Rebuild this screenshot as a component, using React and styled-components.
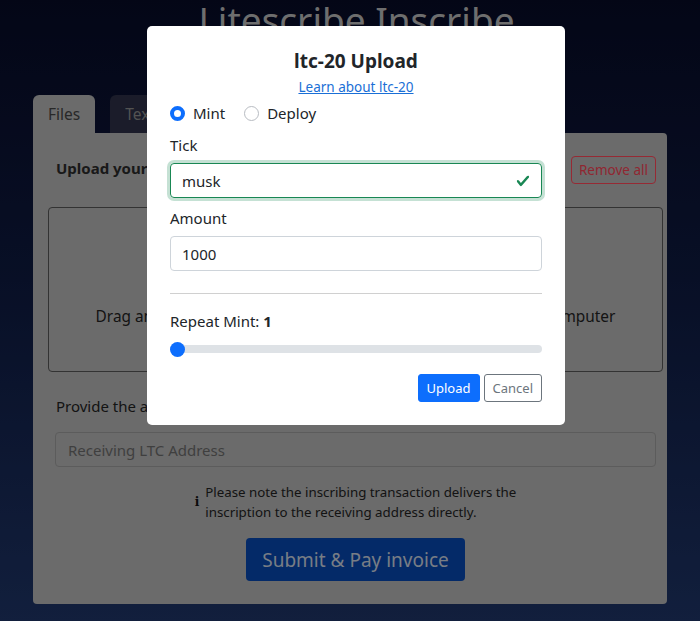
import React from 'react'
import styled, { createGlobalStyle } from 'styled-components'

const GlobalStyle = createGlobalStyle`
  html, body {
    margin: 0;
    padding: 0;
    height: 100%;
  }
  body {
    font-family: "Noto Sans", "Open Sans", sans-serif;
    color: #212529;
    background: linear-gradient(180deg, #070b26 0%, #0e1a40 45%, #1e3466 100%);
    min-height: 621px;
    overflow: hidden;
  }
`

const Page = styled.div`
  width: 700px;
  height: 621px;
  display: flex;
  flex-direction: column;
  align-items: center;
`

const Title = styled.h1`
  margin: -3px 0 0 13px;
  font-size: 37px;
  font-weight: 400;
  line-height: 46px;
  color: #b8b8b8;
`

const Tabs = styled.div`
  align-self: stretch;
  display: flex;
  gap: 15px;
  margin: 52px 0 0 33px;
`

const Tab = styled.div`
  height: 38px;
  padding: 0 15px;
  display: flex;
  align-items: center;
  font-size: 15.5px;
  border-radius: 6px 6px 0 0;
  background: ${p => (p.$active ? '#b2b2b2' : '#2d3046')};
  color: ${p => (p.$active ? '#444' : '#8a8a8a')};
`

const Card = styled.div`
  width: 634px;
  height: 471px;
  box-sizing: border-box;
  background: #b2b2b2;
  border-radius: 0 4px 4px 4px;
  padding: 23px 4px 0 15px;
  display: flex;
  flex-direction: column;
`

const CardHead = styled.div`
  display: flex;
  justify-content: space-between;
  align-items: center;
  padding: 0 7px 0 8px;
`

const HeadText = styled.div`
  font-weight: 700;
  font-size: 15px;
  line-height: 20px;
  margin-top: -4px;
  color: #2a2a2a;
`

const RemoveBtn = styled.button`
  font-family: inherit;
  font-size: 13.5px;
  height: 28px;
  padding: 0 7px;
  background: transparent;
  border: 1px solid #fb4658;
  border-radius: 4px;
  color: #f04152;
`

const Drop = styled.div`
  margin-top: 23px;
  height: 165px;
  box-sizing: border-box;
  border: 1px solid #555;
  border-radius: 4px;
  display: flex;
  justify-content: center;
  padding-top: 98px;
  font-size: 15.4px;
  color: #222;
  white-space: nowrap;
`

const FieldLabel = styled.div`
  margin-top: 24px;
  padding-left: 8px;
  font-size: 15px;
  color: #222;
`

const AddressInput = styled.div`
  margin: 16px 7px 0 7px;
  height: 35px;
  box-sizing: border-box;
  border: 1px solid #9a9a9a;
  border-radius: 4px;
  padding: 0 12px;
  display: flex;
  align-items: center;
  font-size: 15px;
  color: #6a6a6a;
`

const Note = styled.div`
  margin-top: 15px;
  margin-left: 0;
  align-self: center;
  display: flex;
  align-items: center;
  gap: 6px;
  font-size: 13.3px;
  line-height: 20px;
  color: #222;
`

const InfoIcon = styled.span`
  font-family: "DejaVu Serif", serif;
  font-weight: 700;
  font-size: 12px;
  color: #111;
`

const SubmitBtn = styled.button`
  align-self: center;
  margin-top: 16px;
  height: 43px;
  padding: 0 16px;
  font-family: inherit;
  font-size: 19px;
  border: none;
  border-radius: 4px;
  background: #0747ad;
  color: #c8d0de;
`

const Backdrop = styled.div`
  position: fixed;
  inset: 0;
  background: rgba(0, 0, 0, 0.4);
`

const Modal = styled.div`
  position: fixed;
  top: 26px;
  left: 147px;
  width: 418px;
  box-sizing: border-box;
  background: #fff;
  border-radius: 5px;
  padding: 23px 23px 23px;
  display: flex;
  flex-direction: column;
`

const ModalTitle = styled.h2`
  margin: 0;
  text-align: center;
  font-size: 19px;
  font-weight: 700;
  line-height: 24px;
  color: #212529;
`

const LearnLink = styled.a`
  margin-top: 4px;
  align-self: center;
  font-size: 13.5px;
  line-height: 20px;
  color: #1a6fd6;
  text-decoration: underline;
`

const RadioRow = styled.div`
  margin-top: 4px;
  display: flex;
  gap: 19px;
  height: 24px;
  align-items: center;
`

const RadioItem = styled.label`
  display: flex;
  align-items: center;
  gap: 8px;
  font-size: 15px;
`

const RadioDot = styled.span`
  width: 15px;
  height: 15px;
  box-sizing: border-box;
  border-radius: 50%;
  border: ${p => (p.$checked ? '4px solid #0d6efd' : '1px solid #b8bcc2')};
  background: #fff;
`

const Label = styled.div`
  margin-top: ${p => p.$mt || 9}px;
  font-size: 15px;
  line-height: 22px;
`

const InputBox = styled.div`
  margin-top: 7px;
  height: 35px;
  box-sizing: border-box;
  border: 1px solid ${p => (p.$valid ? '#198754' : '#ced4da')};
  box-shadow: ${p => (p.$valid ? '0 0 0 3px rgba(25,135,84,0.25)' : 'none')};
  border-radius: 4px;
  padding: 0 11px;
  display: flex;
  align-items: center;
  justify-content: space-between;
  font-size: 15px;
`

const Divider = styled.hr`
  margin: 22px 0 0;
  border: none;
  border-top: 1px solid #d0d0d0;
`

const RepeatLabel = styled(Label)`
  margin-top: 16px;
  b {
    font-weight: 700;
  }
`

const Range = styled.input`
  -webkit-appearance: none;
  appearance: none;
  margin: 9px 0 0;
  width: 100%;
  height: 16px;
  background: transparent;
  &::-webkit-slider-runnable-track {
    height: 8px;
    border-radius: 4px;
    background: #dee2e6;
  }
  &::-webkit-slider-thumb {
    -webkit-appearance: none;
    width: 15px;
    height: 15px;
    margin-top: -3.5px;
    border-radius: 50%;
    background: #0d6efd;
    border: none;
  }
`

const Footer = styled.div`
  margin-top: 17px;
  display: flex;
  justify-content: flex-end;
  gap: 4px;
`

const Btn = styled.button`
  font-family: inherit;
  font-size: 13px;
  height: 28px;
  padding: 0 8px;
  border-radius: 3px;
  border: 1px solid ${p => (p.$primary ? '#0d6efd' : '#6c757d')};
  background: ${p => (p.$primary ? '#0d6efd' : '#fff')};
  color: ${p => (p.$primary ? '#fff' : '#6c757d')};
`

const Check = () => (
  <svg width="14" height="14" viewBox="0 0 8 8">
    <path
      fill="#198754"
      d="M2.3 6.73.6 4.53c-.4-1.04.46-1.4 1.1-.8l1.1 1.4 3.4-3.8c.6-.63 1.6-.27 1.2.7l-4 4.6c-.43.5-.8.4-1.1.1z"
    />
  </svg>
)

export default function App() {
  return (
    <>
      <GlobalStyle />
      <Page>
        <Title>Litescribe Inscribe</Title>
        <Tabs>
          <Tab $active>Files</Tab>
          <Tab>Text</Tab>
        </Tabs>
        <Card>
          <CardHead>
            <HeadText>Upload your files</HeadText>
            <RemoveBtn>Remove all</RemoveBtn>
          </CardHead>
          <Drop>Drag and drop your files here, or click to select files from your computer</Drop>
          <FieldLabel>Provide the address to receive the inscription</FieldLabel>
          <AddressInput>Receiving LTC Address</AddressInput>
          <Note>
            <InfoIcon>i</InfoIcon>
            <span>
              Please note the inscribing transaction delivers the
              <br />
              inscription to the receiving address directly.
            </span>
          </Note>
          <SubmitBtn>Submit &amp; Pay invoice</SubmitBtn>
        </Card>
      </Page>
      <Backdrop />
      <Modal>
        <ModalTitle>ltc-20 Upload</ModalTitle>
        <LearnLink href="#">Learn about ltc-20</LearnLink>
        <RadioRow>
          <RadioItem>
            <RadioDot $checked />
            Mint
          </RadioItem>
          <RadioItem>
            <RadioDot />
            Deploy
          </RadioItem>
        </RadioRow>
        <Label $mt={9}>Tick</Label>
        <InputBox $valid>
          musk
          <Check />
        </InputBox>
        <Label $mt={9}>Amount</Label>
        <InputBox>1000</InputBox>
        <Divider />
        <RepeatLabel>
          Repeat Mint: <b>1</b>
        </RepeatLabel>
        <Range type="range" min="1" max="100" defaultValue="1" />
        <Footer>
          <Btn $primary>Upload</Btn>
          <Btn>Cancel</Btn>
        </Footer>
      </Modal>
    </>
  )
}
